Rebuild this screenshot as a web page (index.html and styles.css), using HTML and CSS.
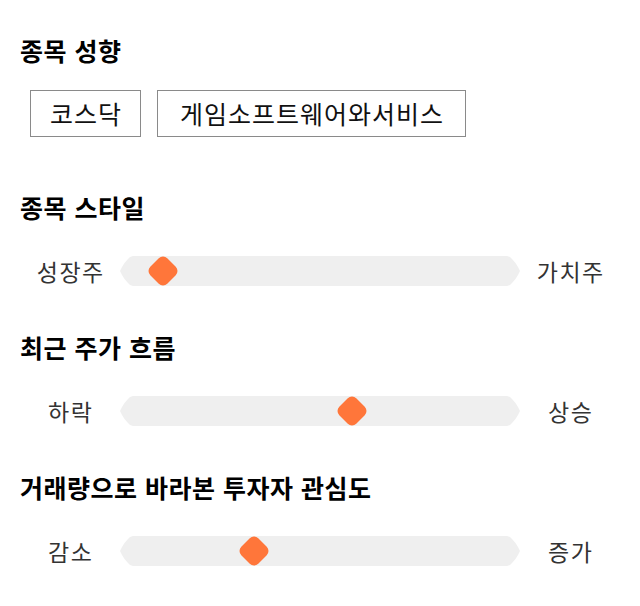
FILE: index.html
```html
<!DOCTYPE html>
<html lang="ko">
<head>
    <meta charset="UTF-8">
    <meta name="viewport" content="width=device-width, initial-scale=1.0">
    <title>종목 성향</title>
    <link rel="stylesheet" href="styles.css">
</head>
<body>
    <div class="panel">
        <div class="section">
            <h2 class="title">종목 성향</h2>
            <div class="tags">
                <span class="tag">코스닥</span>
                <span class="tag">게임소프트웨어와서비스</span>
            </div>
        </div>
        <div class="section">
            <h2 class="title">종목 스타일</h2>
            <div class="meter">
                <span class="label">성장주</span>
                <div class="track"><span class="thumb" style="left: 10.8%"></span></div>
                <span class="label">가치주</span>
            </div>
        </div>
        <div class="section">
            <h2 class="title">최근 주가 흐름</h2>
            <div class="meter">
                <span class="label">하락</span>
                <div class="track"><span class="thumb" style="left: 58%"></span></div>
                <span class="label">상승</span>
            </div>
        </div>
        <div class="section">
            <h2 class="title">거래량으로 바라본 투자자 관심도</h2>
            <div class="meter">
                <span class="label">감소</span>
                <div class="track"><span class="thumb" style="left: 33.5%"></span></div>
                <span class="label">증가</span>
            </div>
        </div>
    </div>
</body>
</html>
```

FILE: styles.css
```css
body {
    margin: 0;
    background: #fff;
    font-family: "Noto Sans CJK KR", "Noto Sans", sans-serif;
    color: #111;
}
.panel {
    padding: 34px 20px 0;
}
.section {
    margin-bottom: 45px;
}
.section:first-child {
    margin-bottom: 54px;
}
.title {
    margin: 0;
    font-size: 25px;
    line-height: 32px;
    font-weight: bold;
    letter-spacing: 0.5px;
    color: #000;
}
.tags {
    display: flex;
    gap: 16px;
    margin-top: 24px;
    padding-left: 10px;
}
.tag {
    box-sizing: border-box;
    height: 47px;
    padding: 0 21px 0 22px;
    border: 1px solid #8a8a8a;
    font-size: 25px;
    line-height: 45px;
    letter-spacing: 1px;
    color: #111;
}
.tag:first-child {
    padding: 0 18px 0 19px;
}
.meter {
    display: flex;
    align-items: center;
    margin-top: 33px;
}
.meter .label {
    width: 100px;
    text-align: center;
    font-size: 23px;
    line-height: 30px;
    letter-spacing: 1.5px;
    text-indent: 1.5px;
    color: #333;
}
.track {
    position: relative;
    flex: 1;
    height: 30px;
    background-color: #efefef;
    clip-path: polygon(13px 0, calc(100% - 13px) 0, calc(100% - 10px) 1px, calc(100% - 8px) 3px, calc(100% - 4.5px) 7px, calc(100% - 2px) 11px, 100% 50%, calc(100% - 2px) 19px, calc(100% - 4.5px) 23px, calc(100% - 8px) 27px, calc(100% - 10px) 29px, calc(100% - 13px) 100%, 13px 100%, 10px 29px, 8px 27px, 4.5px 23px, 2px 19px, 0 50%, 2px 11px, 4.5px 7px, 8px 3px, 10px 1px);
}
.track .thumb {
    position: absolute;
    top: 50%;
    width: 24px;
    height: 24px;
    margin-left: -12px;
    background-color: #ff763a;
    border-radius: 6px;
    transform: translateY(-50%) rotate(45deg);
}
```
